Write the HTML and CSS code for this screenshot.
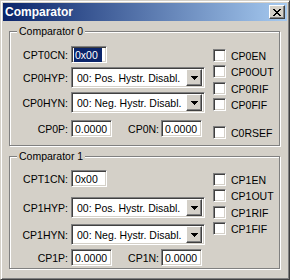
FILE: index.html
```html
<!DOCTYPE html>
<html>
<head>
  <title>Comparator</title>
  <link rel="stylesheet" href="styles.css">
</head>
<body>

<div class="window">
  <div class="titlebar">
    <span class="title">Comparator</span>
    <button class="close">
      <svg width="8" height="7" viewBox="0 0 8 7" shape-rendering="crispEdges">
        <path d="M0 0h2v1h-2z M6 0h2v1h-2z M1 1h2v1h-2z M5 1h2v1h-2z M2 2h4v1h-4z M3 3h2v1h-2z M2 4h4v1h-4z M1 5h2v1h-2z M5 5h2v1h-2z M0 6h2v1h-2z M6 6h2v1h-2z" fill="#000"/>
      </svg>
    </button>
  </div>

  <!-- Comparator 0 -->
  <div class="group g0">
    <div class="group-title">Comparator 0</div>
    <div class="group-body">
      <div class="fields">
        <div class="row">
          <span class="lbl">CPT0CN:</span>
          <div class="edit edit-short"><span class="sel">0x00</span></div>
        </div>
        <div class="row row-combo">
          <span class="lbl">CP0HYP:</span>
          <div class="combo">
            <span class="combo-text">00: Pos. Hystr. Disabl.</span>
            <span class="drop"><svg width="7" height="4" viewBox="0 0 7 4" shape-rendering="crispEdges"><path d="M0 0h7v1h-1v1h-1v1h-1v1h-1v-1h-1v-1h-1v-1h-1z" fill="#000"/></svg></span>
          </div>
        </div>
        <div class="row row-combo2">
          <span class="lbl">CP0HYN:</span>
          <div class="combo">
            <span class="combo-text">00: Neg. Hystr. Disabl.</span>
            <span class="drop"><svg width="7" height="4" viewBox="0 0 7 4" shape-rendering="crispEdges"><path d="M0 0h7v1h-1v1h-1v1h-1v1h-1v-1h-1v-1h-1v-1h-1z" fill="#000"/></svg></span>
          </div>
        </div>
        <div class="row row-p">
          <span class="lbl">CP0P:</span>
          <div class="edit">0.0000</div>
          <span class="lbl lbl-n">CP0N:</span>
          <div class="edit">0.0000</div>
        </div>
      </div>
      <div class="flags">
        <div class="flag"><span class="check"></span>CP0EN</div>
        <div class="flag"><span class="check"></span>CP0OUT</div>
        <div class="flag flag-wide"><span class="check"></span>CP0RIF</div>
        <div class="flag"><span class="check"></span>CP0FIF</div>
        <div class="flag flag-rsef"><span class="check"></span>C0RSEF</div>
      </div>
    </div>
  </div>

  <!-- Comparator 1 -->
  <div class="group g1">
    <div class="group-title">Comparator 1</div>
    <div class="group-body">
      <div class="fields">
        <div class="row">
          <span class="lbl">CPT1CN:</span>
          <div class="edit edit-short">0x00</div>
        </div>
        <div class="row row-combo">
          <span class="lbl">CP1HYP:</span>
          <div class="combo">
            <span class="combo-text">00: Pos. Hystr. Disabl.</span>
            <span class="drop"><svg width="7" height="4" viewBox="0 0 7 4" shape-rendering="crispEdges"><path d="M0 0h7v1h-1v1h-1v1h-1v1h-1v-1h-1v-1h-1v-1h-1z" fill="#000"/></svg></span>
          </div>
        </div>
        <div class="row row-combo2">
          <span class="lbl">CP1HYN:</span>
          <div class="combo">
            <span class="combo-text">00: Neg. Hystr. Disabl.</span>
            <span class="drop"><svg width="7" height="4" viewBox="0 0 7 4" shape-rendering="crispEdges"><path d="M0 0h7v1h-1v1h-1v1h-1v1h-1v-1h-1v-1h-1v-1h-1z" fill="#000"/></svg></span>
          </div>
        </div>
        <div class="row row-p">
          <span class="lbl">CP1P:</span>
          <div class="edit">0.0000</div>
          <span class="lbl lbl-n">CP1N:</span>
          <div class="edit">0.0000</div>
        </div>
      </div>
      <div class="flags">
        <div class="flag"><span class="check"></span>CP1EN</div>
        <div class="flag"><span class="check"></span>CP1OUT</div>
        <div class="flag flag-wide"><span class="check"></span>CP1RIF</div>
        <div class="flag"><span class="check"></span>CP1FIF</div>
      </div>
    </div>
  </div>
</div>

</body>
</html>
```

FILE: styles.css
```css
* {
  box-sizing: border-box;
}

body {
  margin: 0;
  font-family: "Liberation Sans", Arial, sans-serif;
  font-size: 10.5px;
  color: #000;
}

.window {
  width: 290px;
  height: 280px;
  padding: 2px;
  background: #d4d0c8;
  border: 1px solid;
  border-color: #d4d0c8 #404040 #404040 #d4d0c8;
  box-shadow: inset 1px 1px #fff, inset -1px -1px #808080;
}

.titlebar {
  height: 18px;
  display: flex;
  align-items: center;
  justify-content: space-between;
  padding: 0 2px;
  background: linear-gradient(to right, #0a246a, #a6caf0);
}

.title {
  color: #fff;
  font-weight: bold;
  font-size: 12px;
}

.close {
  width: 16px;
  height: 14px;
  padding: 0;
  display: flex;
  align-items: center;
  justify-content: center;
  background: #d4d0c8;
  border: 1px solid;
  border-color: #fff #404040 #404040 #fff;
  box-shadow: inset -1px -1px #808080;
}

/* group boxes */
.group {
  margin: 10px 7px 0 6px;
  border: 1px solid #808080;
  box-shadow: inset 1px 1px #fff, 1px 1px #fff;
}

.g0 {
  height: 115px;
}

.g1 {
  height: 113px;
}

.group-title {
  width: max-content;
  margin: -7px 0 0 7px;
  padding: 0 2px;
  line-height: 13px;
  background: #d4d0c8;
}

.group-body {
  display: flex;
}

.fields {
  width: 195px;
  display: flex;
  flex-direction: column;
}

.row {
  display: flex;
  align-items: center;
}

.lbl {
  width: 58px;
  margin-right: 3px;
  text-align: right;
  white-space: nowrap;
}

.lbl-n {
  width: 47px;
  margin-right: 2px;
}

/* sunken fields */
.edit, .combo, .check {
  background: #fff;
  border: 1px solid;
  border-color: #808080 #fff #fff #808080;
  box-shadow: inset 1px 1px #404040, inset -1px -1px #d4d0c8;
}

.edit {
  width: 41px;
  height: 17px;
  padding-left: 3px;
  display: flex;
  align-items: center;
}

.edit-short {
  width: 36px;
}

.sel {
  margin-left: -1px;
  padding: 1px 4px 1px 1px;
  background: #0a246a;
  color: #fff;
}

.combo {
  width: 134px;
  height: 21px;
  padding: 2px;
  display: flex;
  align-items: center;
}

.combo-text {
  flex: 1;
  padding-left: 3px;
  white-space: nowrap;
}

.drop {
  width: 16px;
  height: 17px;
  display: flex;
  align-items: center;
  justify-content: center;
  background: #d4d0c8;
  border: 1px solid;
  border-color: #fff #404040 #404040 #fff;
  box-shadow: inset -1px -1px #808080;
}

/* checkboxes */
.flags {
  margin-left: 8px;
  display: flex;
  flex-direction: column;
  gap: 3px;
}

.flag {
  height: 13px;
  display: flex;
  align-items: center;
  white-space: nowrap;
}

.flag-wide {
  margin-top: 1px;
}

.check {
  width: 13px;
  height: 13px;
  margin-right: 5px;
}

/* vertical spacing, group 0 */
.g0 .fields {
  padding-top: 8px;
}

.g0 .row-combo, .g0 .row-combo2 {
  margin-top: 4px;
}

.g0 .row-p {
  margin-top: 7px;
}

.g0 .flags {
  padding-top: 11px;
}

.g0 .flag-rsef {
  margin-top: 12px;
}

/* vertical spacing, group 1 */
.g1 .fields {
  padding-top: 7px;
}

.g1 .row-combo {
  margin-top: 10px;
}

.g1 .row-combo2 {
  margin-top: 6px;
}

.g1 .row-p {
  margin-top: 4px;
}

.g1 .flags {
  padding-top: 10px;
}
```
